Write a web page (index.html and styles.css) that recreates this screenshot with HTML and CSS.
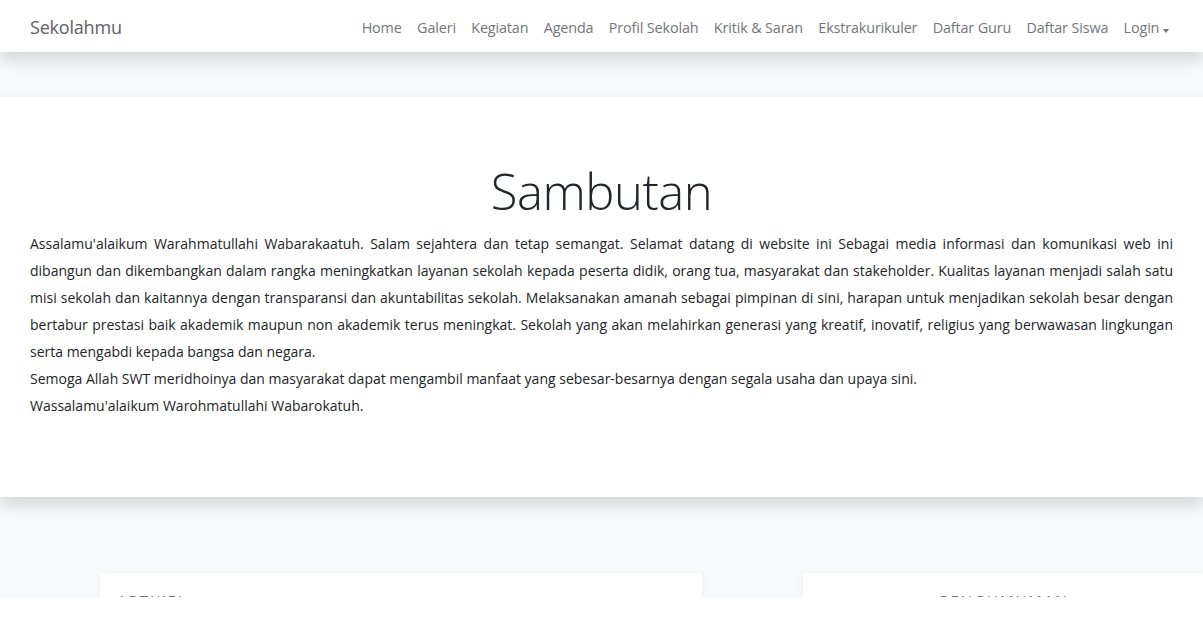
FILE: index.html
```html
<!DOCTYPE html>
<html lang="id">
<head>
<meta charset="utf-8">
<title>Sekolahmu</title>
<link rel="stylesheet" href="styles.css">
</head>
<body>
<nav class="navbar">
  <a class="brand" href="#">Sekolahmu</a>
  <ul class="nav">
    <li><a href="#">Home</a></li>
    <li><a href="#">Galeri</a></li>
    <li><a href="#">Kegiatan</a></li>
    <li><a href="#">Agenda</a></li>
    <li><a href="#">Profil Sekolah</a></li>
    <li><a href="#">Kritik &amp; Saran</a></li>
    <li><a href="#">Ekstrakurikuler</a></li>
    <li><a href="#">Daftar Guru</a></li>
    <li><a href="#">Daftar Siswa</a></li>
    <li><a href="#" class="dropdown">Login<span class="caret"></span></a></li>
  </ul>
</nav>
<main class="main">
  <section class="sambutan">
    <h1 class="display">Sambutan</h1>
    <p class="lead-text">Assalamu'alaikum Warahmatullahi Wabarakaatuh. Salam sejahtera dan tetap semangat. Selamat datang di website ini Sebagai media informasi dan komunikasi web ini dibangun dan dikembangkan dalam rangka meningkatkan layanan sekolah kepada peserta didik, orang tua, masyarakat dan stakeholder. Kualitas layanan menjadi salah satu misi sekolah dan kaitannya dengan transparansi dan akuntabilitas sekolah. Melaksanakan amanah sebagai pimpinan di sini, harapan untuk menjadikan sekolah besar dengan bertabur prestasi baik akademik maupun non akademik terus meningkat. Sekolah yang akan melahirkan generasi yang kreatif, inovatif, religius yang berwawasan lingkungan serta mengabdi kepada bangsa dan negara.<br>Semoga Allah SWT meridhoinya dan masyarakat dapat mengambil manfaat yang sebesar-besarnya dengan segala usaha dan upaya sini.<br>Wassalamu'alaikum Warohmatullahi Wabarokatuh.</p>
  </section>
  <section class="cards">
    <div class="card card-left"><h6 class="card-title">ARTIKEL</h6></div>
    <div class="card card-right"><h6 class="card-title center">PENGUMUMAN</h6></div>
  </section>
</main>
<div class="bottom-band"></div>
</body>
</html>
```

FILE: styles.css
```css
* { box-sizing: border-box; }
html, body { margin: 0; padding: 0; }
body {
  font-family: "Open Sans", "Noto Sans", sans-serif;
  background: #f8f9fa;
  color: #212529;
  overflow: hidden;
  height: 633px;
}
a { text-decoration: none; }

.navbar {
  height: 52px;
  background: #fff;
  display: flex;
  align-items: center;
  justify-content: space-between;
  padding: 2px 26px 0 30px;
  box-shadow: 0 8px 16px rgba(0,0,0,.15);
  position: relative;
  z-index: 2;
}
.brand {
  font-size: 18px;
  color: #5c6166;
  letter-spacing: -0.2px;
}
.nav {
  list-style: none;
  margin: 0;
  padding: 0;
  display: flex;
}
.nav a {
  display: block;
  padding: 0 7.7px;
  font-size: 14.4px;
  color: #72767a;
  letter-spacing: -0.15px;
}
.dropdown { display: flex; align-items: center; }
.caret {
  display: inline-block;
  margin-left: 4px;
  border-top: 4px solid #72767a;
  border-left: 3.5px solid transparent;
  border-right: 3.5px solid transparent;
  margin-top: -2px;
}

.main { padding-top: 45px; }

.sambutan {
  background: #fff;
  height: 400px;
  padding: 65px 30px 0;
  box-shadow: 0 8px 16px rgba(0,0,0,.15);
  position: relative;
  z-index: 1;
}
.display {
  margin: 0;
  text-align: center;
  font-size: 49px;
  font-weight: 300;
  line-height: 1.2;
  color: #212529;
  letter-spacing: -0.5px;
}
.lead-text {
  margin: 9px 0 0;
  font-size: 14px;
  line-height: 27px;
  text-align: justify;
  color: #212529;
}

.cards {
  display: flex;
  gap: 101px;
  padding: 76px 0 0 100px;
}
.card {
  background: #fff;
  height: 40px;
  box-shadow: 0 2px 6px rgba(0,0,0,.06);
  padding: 17px 17px 0;
}
.card-left { width: 602px; flex: none; }
.card-right { width: 402px; flex: none; }
.card-title {
  margin: 0;
  font-size: 15px;
  font-weight: 400;
  letter-spacing: 2px;
  color: #6c757d;
}
.center { text-align: center; }

.bottom-band {
  position: fixed;
  left: 0;
  right: 0;
  bottom: 0;
  height: 36px;
  background: #fff;
  z-index: 5;
}
```
